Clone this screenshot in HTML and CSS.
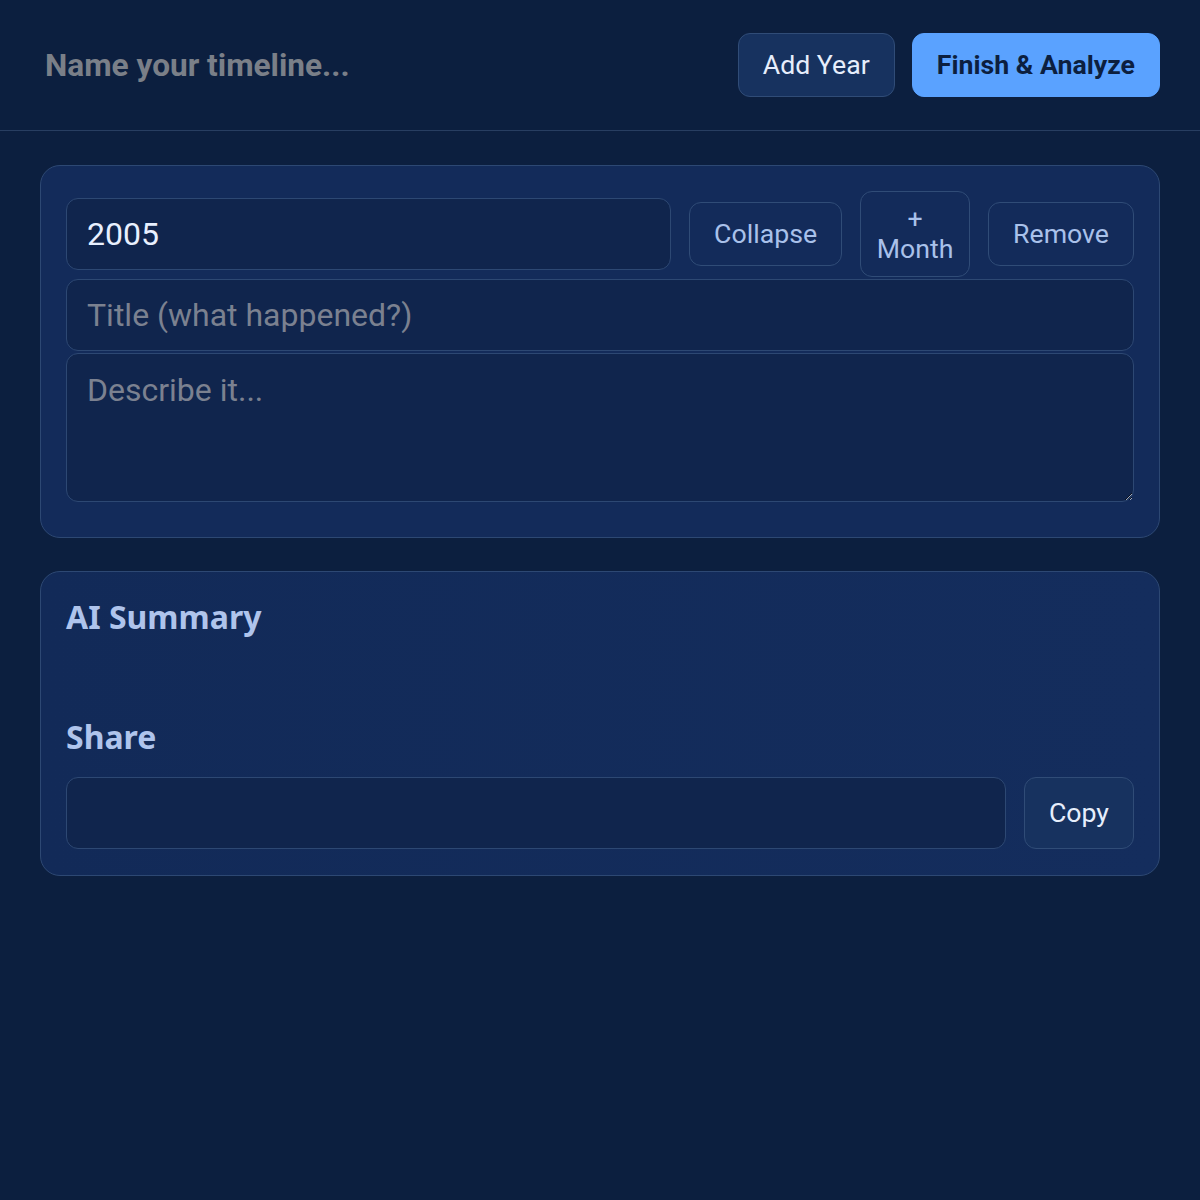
FILE: index.html
```html
<!DOCTYPE html>
<html lang="en">
<head>
    <meta charset="UTF-8">
    <meta name="viewport" content="width=device-width, initial-scale=1.0">
    <title>Timeline</title>
    <link rel="stylesheet" href="styles.css">
</head>
<body>
    <header class="topbar">
        <input type="text" class="timeline-name" placeholder="Name your timeline...">
        <div class="topbar-actions">
            <button class="btn btn-soft">Add Year</button>
            <button class="btn btn-primary">Finish &amp; Analyze</button>
        </div>
    </header>
    <main class="page">
        <section class="card year-card">
            <div class="year-row">
                <input type="text" class="field year-field" value="2005">
                <button class="btn">Collapse</button>
                <button class="btn btn-narrow">+ Month</button>
                <button class="btn">Remove</button>
            </div>
            <input type="text" class="field" placeholder="Title (what happened?)">
            <textarea class="field field-area" placeholder="Describe it..."></textarea>
        </section>
        <section class="card summary-card">
            <h3 class="card-title">AI Summary</h3>
            <div class="summary-text"></div>
            <h3 class="card-title">Share</h3>
            <div class="share-row">
                <input type="text" class="field share-field">
                <button class="btn btn-soft btn-tall">Copy</button>
            </div>
        </section>
    </main>
</body>
</html>
```

FILE: styles.css
```css
html {
    color-scheme: dark;
}

body {
    margin: 0;
    background: #0c1f3f;
    font-family: Roboto, "Liberation Sans", sans-serif;
    color: #e6eefc;
    min-height: 1200px;
}

.topbar {
    display: flex;
    align-items: center;
    justify-content: space-between;
    padding: 33px 40px 33px;
    border-bottom: 1px solid #283e61;
}

.timeline-name {
    background: transparent;
    border: none;
    outline: none;
    font-family: Roboto, sans-serif;
    font-size: 31.6px;
    font-weight: 700;
    color: #e6eefc;
    padding: 4px 5px;
    width: 500px;
}

.timeline-name::placeholder {
    color: #7a7f88;
}

.topbar-actions {
    display: flex;
    gap: 17px;
}

.btn {
    box-sizing: border-box;
    min-height: 64px;
    padding: 12px 24px;
    line-height: 30px;
    font-family: Roboto, sans-serif;
    font-size: 26.7px;
    color: #a9c1ea;
    background: #132b5a;
    border: 1px solid #304c77;
    border-radius: 12px;
    cursor: pointer;
}

.btn-soft {
    background: #17325f;
    color: #e6eefc;
}

.btn-primary {
    background: #5aa2ff;
    border-color: #5aa2ff;
    color: #0c1f3f;
    font-weight: 700;
}

.btn-narrow {
    width: 110px;
    padding: 12px 10px;
}

.btn-tall {
    height: 72px;
}

.page {
    padding: 34px 40px;
    display: flex;
    flex-direction: column;
    gap: 33px;
}

.card {
    background: #132b5a;
    border: 1px solid #2d4873;
    border-radius: 20px;
    padding: 25px 25px;
    display: flex;
    flex-direction: column;
}

.year-card {
    gap: 2px;
    padding-bottom: 35px;
}

.year-row {
    display: flex;
    align-items: center;
    gap: 18px;
}

.field {
    box-sizing: border-box;
    height: 72px;
    padding: 16px 20px;
    font-family: Roboto, sans-serif;
    font-size: 32px;
    color: #e8f0ff;
    background: #10254d;
    border: 1px solid #2d4873;
    border-radius: 12px;
    outline: none;
}

.field::placeholder {
    color: #7b8190;
}

.year-field {
    flex: 1;
    min-width: 0;
}

.field-area {
    height: 149px;
    resize: vertical;
    padding-top: 17px;
}

.summary-card {
    padding-top: 23px;
    padding-bottom: 26px;
    background: linear-gradient(90deg, #122a58, #142d5d);
}

.card-title {
    margin: 0;
    font-family: "Noto Sans", "Open Sans", sans-serif;
    font-size: 32px;
    line-height: 44px;
    font-weight: 700;
    color: #afc4ec;
}

.summary-text {
    height: 76px;
}

.share-row {
    display: flex;
    gap: 18px;
    margin-top: 18px;
}

.share-field {
    flex: 1;
}
```
